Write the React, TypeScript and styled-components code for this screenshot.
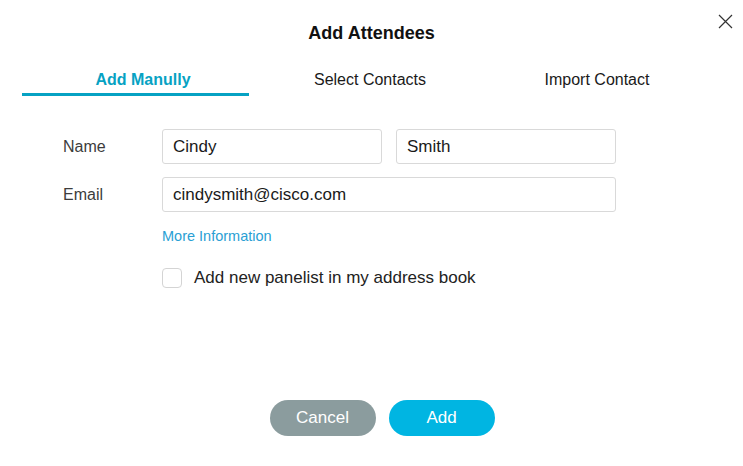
import { useState } from "react";
import styled, { createGlobalStyle } from "styled-components";

const GlobalStyle = createGlobalStyle`
  html, body {
    margin: 0;
    padding: 0;
    background: #ffffff;
  }
  body {
    font-family: "Liberation Sans", Arial, sans-serif;
    color: #222;
  }
`;

const TABS = ["Add Manully", "Select Contacts", "Import Contact"];

const App = () => {
  const [activeTab, setActiveTab] = useState(0);
  const [checked, setChecked] = useState(false);

  return (
    <>
      <GlobalStyle />
      <Dialog>
        <Header>
          <Title>Add Attendees</Title>
          <CloseButton aria-label="Close">
            <svg width="15" height="15" viewBox="0 0 15 15">
              <path
                d="M1 1 L14 14 M14 1 L1 14"
                stroke="#333"
                strokeWidth="1.2"
                fill="none"
              />
            </svg>
          </CloseButton>
        </Header>

        <TabBar>
          {TABS.map((tab, idx) => (
            <Tab
              key={tab}
              $active={idx === activeTab}
              onClick={() => setActiveTab(idx)}
            >
              {tab}
            </Tab>
          ))}
        </TabBar>

        <Form>
          <Row>
            <Label>Name</Label>
            <Fields>
              <TextInput defaultValue="Cindy" />
              <TextInput defaultValue="Smith" />
            </Fields>
          </Row>
          <Row>
            <Label>Email</Label>
            <Fields>
              <TextInput $wide defaultValue="cindysmith@cisco.com" />
            </Fields>
          </Row>
          <Indented>
            <MoreLink href="#">More Information</MoreLink>
          </Indented>
          <Indented>
            <CheckRow>
              <CheckBox
                type="checkbox"
                checked={checked}
                onChange={(e) => setChecked(e.target.checked)}
              />
              Add new panelist in my address book
            </CheckRow>
          </Indented>
        </Form>

        <Footer>
          <PillButton $variant="cancel">Cancel</PillButton>
          <PillButton $variant="primary">Add</PillButton>
        </Footer>
      </Dialog>
    </>
  );
};

export default App;

const Dialog = styled.div`
  position: relative;
  display: flex;
  flex-direction: column;
  width: 743px;
  height: 466px;
  background: #fff;
`;

const Header = styled.div`
  display: flex;
  justify-content: center;
  align-items: center;
  height: 66px;
`;

const Title = styled.h1`
  margin: 0;
  font-size: 18px;
  font-weight: 700;
  color: #111;
`;

const CloseButton = styled.button`
  position: absolute;
  top: 14px;
  right: 10px;
  padding: 0;
  border: 0;
  background: none;
  cursor: pointer;
  line-height: 0;
`;

const TabBar = styled.div`
  display: grid;
  grid-template-columns: repeat(3, 227px);
  padding-left: 22px;
`;

const Tab = styled.div<{ $active: boolean }>`
  height: 27px;
  padding-left: 15px;
  text-align: center;
  font-size: 16px;
  line-height: 27px;
  font-weight: ${(p) => (p.$active ? 700 : 400)};
  color: ${(p) => (p.$active ? "#06a2c3" : "#1a1a1a")};
  border-bottom: 3px solid
    ${(p) => (p.$active ? "#06a2c3" : "transparent")};
  cursor: pointer;
`;

const Form = styled.div`
  display: flex;
  flex-direction: column;
  padding: 33px 0 0 63px;
`;

const Row = styled.div`
  display: flex;
  align-items: center;
  margin-bottom: 13px;
`;

const Label = styled.div`
  width: 99px;
  font-size: 16px;
  color: #3c3c3c;
`;

const Fields = styled.div`
  display: flex;
  gap: 14px;
`;

const TextInput = styled.input<{ $wide?: boolean }>`
  box-sizing: border-box;
  width: ${(p) => (p.$wide ? "454px" : "220px")};
  height: 35px;
  padding: 0 10px;
  border: 1px solid #d9d9d9;
  border-radius: 3px;
  font-family: "Liberation Sans", Arial, sans-serif;
  font-size: 17px;
  color: #1a1a1a;
  outline: none;
`;

const Indented = styled.div`
  padding-left: 99px;
`;

const MoreLink = styled.a`
  display: inline-block;
  margin-top: 3px;
  font-size: 14.5px;
  color: #2aa0d4;
  text-decoration: none;
`;

const CheckRow = styled.label`
  display: flex;
  align-items: center;
  gap: 12px;
  margin-top: 23px;
  font-size: 17px;
  color: #222;
  cursor: pointer;
`;

const CheckBox = styled.input`
  appearance: none;
  box-sizing: border-box;
  width: 20px;
  height: 20px;
  margin: 0;
  border: 1px solid #d4d4d4;
  border-radius: 4px;
  background: #fff;
`;

const Footer = styled.div`
  display: flex;
  justify-content: center;
  gap: 13px;
  margin-top: auto;
  padding: 0 0 30px 21px;
`;

const PillButton = styled.button<{ $variant: "cancel" | "primary" }>`
  width: 106px;
  height: 36px;
  border: 0;
  border-radius: 18px;
  font-family: "Liberation Sans", Arial, sans-serif;
  font-size: 17px;
  color: #fff;
  background: ${(p) => (p.$variant === "primary" ? "#00b5e2" : "#8b9c9e")};
  cursor: pointer;
`;
